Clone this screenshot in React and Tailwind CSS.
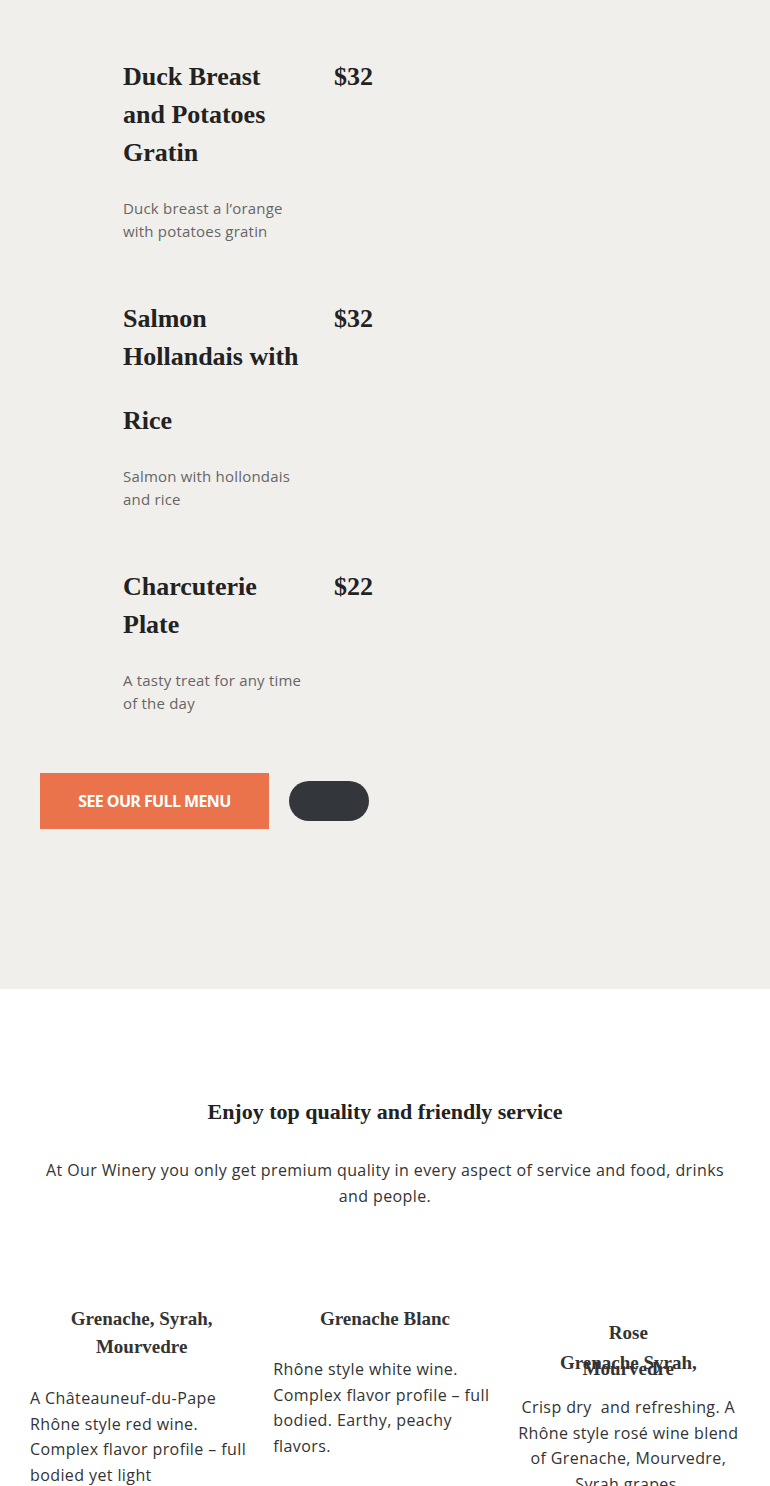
import React from "react";

const serif = { fontFamily: "'Liberation Serif', 'Times New Roman', serif" };
const sans = { fontFamily: "'Open Sans', 'Noto Sans', sans-serif" };

const dishes = [
  {
    lines: ["Duck Breast", "and Potatoes", "Gratin"],
    price: "$32",
    desc: "Duck breast a l’orange with potatoes gratin",
  },
  {
    lines: ["Salmon", "Hollandais with", "Rice"],
    gapBeforeLast: true,
    price: "$32",
    desc: "Salmon with hollondais and rice",
  },
  {
    lines: ["Charcuterie", "Plate"],
    price: "$22",
    desc: "A tasty treat for any time of the day",
  },
];

const MenuItem = ({ dish, first }) => (
  <div className={first ? "flex" : "flex mt-[57px]"}>
    <div className="w-[180px]">
      <h3 className="text-[26px] leading-[38px] font-bold text-[#222222]" style={serif}>
        {dish.lines.map((l, i) => (
          <span
            key={i}
            className={
              dish.gapBeforeLast && i === dish.lines.length - 1 ? "block mt-[26px]" : "block"
            }
          >
            {l}
          </span>
        ))}
      </h3>
      <p className="mt-[25px] text-[15px] leading-[23px] tracking-[0.2px] text-[#666666]" style={sans}>
        {dish.desc}
      </p>
    </div>
    <div className="ml-[31px] text-[26px] leading-[38px] font-bold text-[#222222]" style={serif}>
      {dish.price}
    </div>
  </div>
);

const Wine = ({ children, className }) => (
  <div className={className}>{children}</div>
);

export default function App() {
  return (
    <div className="w-full" style={sans}>
      {/* menu */}
      <section className="bg-[#f1efec] pt-[58px] pb-[160px] px-[40px]">
        <div className="pl-[83px]">
          {dishes.map((d, i) => (
            <MenuItem key={i} dish={d} first={i === 0} />
          ))}
        </div>
        <div className="flex items-center mt-[58px]">
          <button className="bg-[#ea734b] text-white h-[56px] w-[229px] text-[16px] font-bold tracking-[-0.6px] uppercase">
            See our full menu
          </button>
          <button className="ml-[20px] w-[80px] h-[40px] rounded-full bg-[#33373b]" aria-label="more" />
        </div>
      </section>

      {/* service */}
      <section className="bg-white pt-[108px] px-[30px] pb-[10px]">
        <h2
          className="text-center text-[22px] leading-[30px] font-bold text-[#222222]"
          style={serif}
        >
          Enjoy top quality and friendly service
        </h2>
        <p className="mt-[30px] text-center text-[16px] leading-[26px] tracking-[0.4px] text-[#333333]">
          At Our Winery you only get premium quality in every aspect of service and food, drinks
          and people.
        </p>

        <div className="grid grid-cols-3 gap-[20px] mt-[96px] text-[16px] leading-[25.5px] tracking-[0.4px] text-[#333333]">
          <Wine>
            <h4 className="text-center text-[19px] leading-[28px] font-bold tracking-normal text-[#333333] px-[20px]" style={serif}>
              Grenache, Syrah, Mourvedre
            </h4>
            <p className="mt-[25px]">
              A Châteauneuf-du-Pape Rhône style red wine. Complex flavor profile – full bodied yet
              light
            </p>
          </Wine>
          <Wine>
            <h4 className="text-center text-[19px] leading-[28px] font-bold tracking-normal text-[#333333]" style={serif}>
              Grenache Blanc
            </h4>
            <p className="mt-[24px]">
              Rhône style white wine. Complex flavor profile – full bodied. Earthy, peachy flavors.
            </p>
          </Wine>
          <Wine className="pt-[14px]">
            <h4 className="text-center text-[19px] font-bold tracking-normal text-[#333333]" style={serif}>
              <span className="block leading-[28px]">Rose</span>
              <span className="block leading-[6px] mt-[13px] px-[40px]">
                Grenache Syrah, Mourvedre
              </span>
            </h4>
            <p className="mt-[23px] text-center">
              Crisp dry{"\u00a0"} and refreshing. A Rhône style rosé wine blend of Grenache,
              Mourvedre, Syrah grapes.
            </p>
          </Wine>
        </div>
      </section>
    </div>
  );
}
